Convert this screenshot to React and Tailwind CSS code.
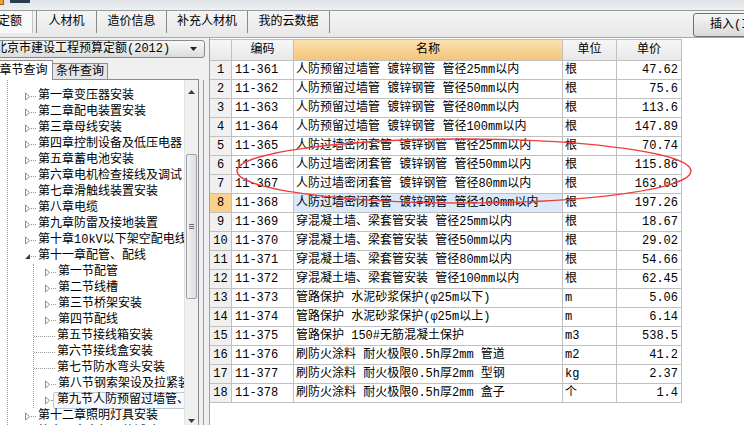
import React from 'react';

const rows = [
  ['11-361', '人防预留过墙管 镀锌钢管 管径25mm以内', '根', '47.62'],
  ['11-362', '人防预留过墙管 镀锌钢管 管径50mm以内', '根', '75.6'],
  ['11-363', '人防预留过墙管 镀锌钢管 管径80mm以内', '根', '113.6'],
  ['11-364', '人防预留过墙管 镀锌钢管 管径100mm以内', '根', '147.89'],
  ['11-365', '人防过墙密闭套管 镀锌钢管 管径25mm以内', '根', '70.74'],
  ['11-366', '人防过墙密闭套管 镀锌钢管 管径50mm以内', '根', '115.86'],
  ['11-367', '人防过墙密闭套管 镀锌钢管 管径80mm以内', '根', '163.03'],
  ['11-368', '人防过墙密闭套管 镀锌钢管 管径100mm以内', '根', '197.26'],
  ['11-369', '穿混凝土墙、梁套管安装 管径25mm以内', '根', '18.67'],
  ['11-370', '穿混凝土墙、梁套管安装 管径50mm以内', '根', '29.02'],
  ['11-371', '穿混凝土墙、梁套管安装 管径80mm以内', '根', '54.66'],
  ['11-372', '穿混凝土墙、梁套管安装 管径100mm以内', '根', '62.45'],
  ['11-373', '管路保护 水泥砂浆保护(φ25m以下)', 'm', '5.06'],
  ['11-374', '管路保护 水泥砂浆保护(φ25m以上)', 'm', '6.14'],
  ['11-375', '管路保护 150#无筋混凝土保护', 'm3', '538.5'],
  ['11-376', '刷防火涂料 耐火极限0.5h厚2mm 管道', 'm2', '41.2'],
  ['11-377', '刷防火涂料 耐火极限0.5h厚2mm 型钢', 'kg', '2.37'],
  ['11-378', '刷防火涂料 耐火极限0.5h厚2mm 盒子', '个', '1.4'],
];

const chapters = [
  '第一章变压器安装',
  '第二章配电装置安装',
  '第三章母线安装',
  '第四章控制设备及低压电器',
  '第五章蓄电池安装',
  '第六章电机检查接线及调试',
  '第七章滑触线装置安装',
  '第八章电缆',
  '第九章防雷及接地装置',
  '第十章10kV以下架空配电线',
];

const sections = [
  ['第一节配管', true],
  ['第二节线槽', true],
  ['第三节桥架安装', true],
  ['第四节配线', true],
  ['第五节接线箱安装', false],
  ['第六节接线盒安装', false],
  ['第七节防水弯头安装', false],
  ['第八节钢索架设及拉紧装置', true],
];

const Collapsed = () => (
  <svg width="7" height="9" viewBox="0 0 7 9" className="shrink-0">
    <path d="M1.5 1 L5.5 4.5 L1.5 8 Z" fill="#fff" stroke="#8c8c8c" strokeWidth="1" />
  </svg>
);

const Expanded = () => (
  <svg width="7" height="9" viewBox="0 0 7 9" className="shrink-0">
    <path d="M6 2 L6 7 L1 7 Z" fill="#3c3c3c" />
  </svg>
);

const Dots = ({ w }) => <span className={`${w} h-0 border-t border-dotted border-[#9a9a9a] shrink-0`} />;

const ChapterRow = ({ label, open }) => (
  <div className="flex items-center h-[16px] whitespace-nowrap">
    <span className="w-[16px] shrink-0" />
    {open ? <Expanded /> : <Collapsed />}
    <Dots w="w-[5px]" />
    <span className="ml-[2px]">{label}</span>
  </div>
);

const SectionRow = ({ label, kids }) => (
  <div className="flex items-center h-[16px] whitespace-nowrap">
    {kids ? (
      <>
        <span className="w-[10px] shrink-0" />
        <Collapsed />
        <Dots w="w-[5px]" />
      </>
    ) : (
      <Dots w="w-[21px]" />
    )}
    <span className="ml-[2px]">{label}</span>
  </div>
);

const Arrow = ({ up }) => (
  <svg width="7" height="4" viewBox="0 0 7 4">
    <path d={up ? 'M0 4 L3.5 0 L7 4 Z' : 'M0 0 L3.5 4 L7 0 Z'} fill="#3c3c3c" />
  </svg>
);

export default function App() {
  return (
    <div className="relative w-[744px] h-[425px] overflow-hidden bg-[#f0f0f0] text-[12px] text-black font-['Liberation_Mono','Noto_Sans_CJK_SC',monospace]">
      {/* title strip */}
      <div className="h-[11px] flex items-start gap-[6px] bg-gradient-to-b from-[#dfe3e8] to-[#eef0f2] border-b border-[#9a9a9a]">
        <span className="w-[4px] h-[5px] bg-[#e8a23c] border-b border-r border-[#a05a10]" />
        <span className="w-[20px] h-[3px] bg-[#2a3a50]" />
      </div>

      {/* module tabs */}
      <div className="h-[27px] flex items-start bg-gradient-to-b from-[#f4f4f4] to-[#e8e8e8] border-b border-[#a8a8a8]">
        <div className="ml-[-12px] w-[45px] h-[22px] flex items-center justify-center bg-[#f9f9f9] border-r border-[#c4c4c4]">
          定额
        </div>
        <div className="w-[4px] h-[22px] border-r border-[#8a8a8a]" />
        <div className="w-[60px] h-[22px] flex items-center justify-center border-r border-[#8a8a8a]">人材机</div>
        <div className="w-[70px] h-[22px] flex items-center justify-center border-r border-[#8a8a8a]">造价信息</div>
        <div className="w-[81px] h-[22px] flex items-center justify-center border-r border-[#8a8a8a]">补充人材机</div>
        <div className="w-[82px] h-[22px] flex items-center justify-center border-r border-[#8a8a8a]">我的云数据</div>
        <div className="ml-auto mr-[-12px] mt-[2px] w-[63px] h-[24px] flex items-center pl-[16px] whitespace-nowrap overflow-hidden rounded-[3px] border border-[#707070] bg-gradient-to-b from-[#f6f6f6] to-[#dadada]">
          插入(I)
        </div>
      </div>

      <div className="flex">
        {/* left pane */}
        <div className="w-[209px] shrink-0 flex flex-col">
          <div className="mt-[2px] ml-[-3px] w-[208px] h-[18px] flex items-center rounded-[3px] border border-[#8a8a8a] bg-gradient-to-b from-[#f8f8f8] to-[#dcdcdc]">
            <span className="ml-[-3px] whitespace-nowrap">北京市建设工程预算定额(2012)</span>
            <svg width="7" height="4" viewBox="0 0 7 4" className="ml-auto mr-[7px]">
              <path d="M0 0 L3.5 4 L7 0 Z" fill="#202020" />
            </svg>
          </div>

          <div className="mt-[2px] h-[20px] flex items-end">
            <div className="ml-[-5px] w-[58px] h-[20px] flex items-center justify-center bg-white border-t border-r border-[#8c8c8c]">
              章节查询
            </div>
            <div className="w-[55px] h-[17px] flex items-center justify-center bg-[#e6e6e6] border-t border-r border-b border-[#8c8c8c]">
              条件查询
            </div>
            <div className="w-[91px] h-0 border-b border-[#8c8c8c] self-end" />
          </div>

          {/* tree panel */}
          <div className="w-[204px] h-[353px] border-r border-[#9a9a9a]">
            <div className="w-[199px] h-full flex bg-white border-r border-[#828790]">
              <div className="flex-1 overflow-hidden">
                <div className="ml-[7px] h-full border-l border-dotted border-[#9a9a9a] pt-[8px]">
                  {chapters.map((c) => (
                    <ChapterRow key={c} label={c} />
                  ))}
                  <ChapterRow label="第十一章配管、配线" open />
                  <div className="ml-[25px] border-l border-dotted border-[#9a9a9a]">
                    {sections.map(([s, k]) => (
                      <SectionRow key={s} label={s} kids={k} />
                    ))}
                    <div className="flex items-center h-[16px] whitespace-nowrap">
                      <span className="w-[10px] shrink-0" />
                      <Collapsed />
                      <Dots w="w-[2px]" />
                      <span className="h-[17px] flex items-center pl-[3px] pr-[6px] border border-[#b9c9da] rounded-[2px] bg-[#f5f9fd]">
                        第九节人防预留过墙管、密闭套管
                      </span>
                    </div>
                  </div>
                  <ChapterRow label="第十二章照明灯具安装" />
                  <ChapterRow label="第十三章电气调整试验" />
                </div>
              </div>

              {/* scrollbar */}
              <div className="w-[14px] shrink-0 flex flex-col items-center bg-[#f0f0f0] border-l border-[#e2e2e2]">
                <div className="h-[24px] flex items-center justify-center">
                  <Arrow up />
                </div>
                <div className="flex-1 w-full flex flex-col items-center">
                  <div className="mt-[50px] w-[11px] h-[145px] rounded-[2px] border border-[#9ca2a8] bg-gradient-to-r from-[#f4f4f4] to-[#dcdcdc] flex flex-col items-center justify-center gap-[1px]">
                    <span className="w-[5px] h-px bg-[#6c6c6c]" />
                    <span className="w-[5px] h-px bg-[#6c6c6c]" />
                    <span className="w-[5px] h-px bg-[#6c6c6c]" />
                  </div>
                </div>
                <div className="h-[24px] flex items-center justify-center">
                  <Arrow />
                </div>
              </div>
            </div>
          </div>
        </div>

        {/* grid */}
        <div className="flex-1 h-[387px] bg-white border-l border-[#a0a0a0] pt-[1px]">
          <div className="grid grid-cols-[22px_62px_269px_54px_65px] w-[472px] border-t border-[#c0c0c0]">
            <div className="h-[21px] bg-gradient-to-b from-[#f7f7f7] to-[#e8e8e8] border-r border-b border-[#c0c0c0]" />
            <div className="h-[21px] flex items-center justify-center bg-gradient-to-b from-[#f7f7f7] to-[#e8e8e8] border-r border-b border-[#c0c0c0]">编码</div>
            <div className="h-[21px] flex items-center justify-center bg-gradient-to-b from-[#fbe2b0] to-[#f4c47a] border-r border-b border-[#c0c0c0]">名称</div>
            <div className="h-[21px] flex items-center justify-center bg-gradient-to-b from-[#f7f7f7] to-[#e8e8e8] border-r border-b border-[#c0c0c0]">单位</div>
            <div className="h-[21px] flex items-center justify-center bg-gradient-to-b from-[#f7f7f7] to-[#e8e8e8] border-r border-b border-[#c0c0c0]">单价</div>

            {rows.map(([code, name, unit, price], i) => {
              const sel = i === 7;
              return (
                <React.Fragment key={code}>
                  <div className={`h-[19px] flex items-center justify-center border-r border-b border-[#c0c0c0] ${sel ? 'bg-[#f9d18c]' : 'bg-[#f0f0f0]'}`}>
                    {i + 1}
                  </div>
                  <div className="h-[19px] flex items-center pl-[3px] border-r border-b border-[#c0c0c0]">{code}</div>
                  <div className={`h-[19px] flex items-center pl-[2px] whitespace-nowrap overflow-hidden border-r border-b border-[#c0c0c0] ${sel ? 'bg-[#dce9f9]' : ''}`}>
                    {name}
                  </div>
                  <div className="h-[19px] flex items-center pl-[2px] border-r border-b border-[#c0c0c0]">{unit}</div>
                  <div className="h-[19px] flex items-center justify-end pr-[3px] border-r border-b border-[#c0c0c0]">{price}</div>
                </React.Fragment>
              );
            })}
          </div>
        </div>
      </div>

      {/* red annotation */}
      <svg className="absolute left-0 top-0 pointer-events-none" width="744" height="425" viewBox="0 0 744 425">
        <ellipse cx="464" cy="171" rx="227" ry="32" fill="none" stroke="#f03c3c" strokeWidth="1.3" />
      </svg>
    </div>
  );
}
